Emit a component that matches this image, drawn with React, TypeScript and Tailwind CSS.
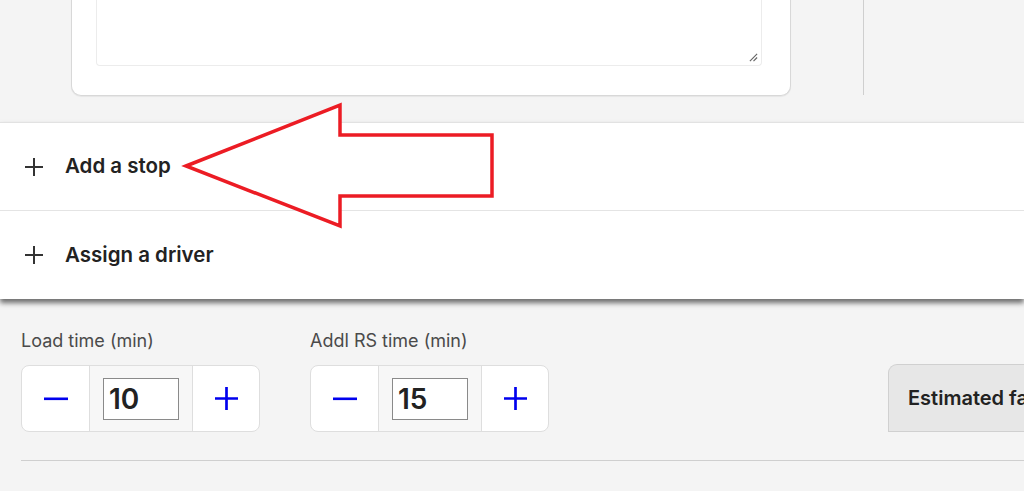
import React from "react";

function Plus({ className }: { className?: string }) {
  return (
    <svg viewBox="0 0 20 20" className={className} fill="none" stroke="currentColor" strokeWidth={2}>
      <path d="M10 1v18M1 10h18" />
    </svg>
  );
}

function Stepper({ value }: { value: string }) {
  return (
    <div className="flex h-[67px] w-[239px] rounded-[8px] border border-[#dedede] bg-white overflow-hidden">
      <div className="flex w-[68px] items-center justify-center border-r border-[#dedede]">
        <svg viewBox="0 0 24 4" className="h-[4px] w-[24px]" fill="#0000ee">
          <rect x="0" y="0.5" width="24" height="2.6" />
        </svg>
      </div>
      <div className="flex flex-1 items-center justify-center bg-[#f7f7f7] border-r border-[#dedede]">
        <div className="flex h-[42px] w-[76px] items-center border border-[#8a8a8a] bg-white pl-[5px] text-[28px] font-semibold leading-none text-[#222] font-['Inter',sans-serif]">
          {value}
        </div>
      </div>
      <div className="flex w-[66px] items-center justify-center">
        <svg viewBox="0 0 24 24" className="h-[23px] w-[23px]" fill="none" stroke="#0000ee" strokeWidth={2.8}>
          <path d="M12 0v24M0 12h24" />
        </svg>
      </div>
    </div>
  );
}

export default function App() {
  return (
    <div className="relative h-[491px] w-[1024px] overflow-hidden bg-[#f4f4f4] font-['Inter',sans-serif]">
      {/* top area */}
      <div className="flex h-[122px]">
        <div className="ml-[71px] mt-[-20px] h-[116px] w-[720px] rounded-b-[10px] border border-t-0 border-[#d8d8d8] bg-white shadow-[0_1px_1px_rgba(0,0,0,0.06)]">
          <div className="relative ml-[24px] h-[86px] w-[666px] rounded-[4px] border border-t-0 border-[#ececec] bg-white">
            <svg viewBox="0 0 10 10" className="absolute bottom-[3px] right-[3px] h-[9px] w-[9px]" stroke="#666" strokeWidth={1.3}>
              <path d="M9 1L1 9M9 5L5 9" />
            </svg>
          </div>
        </div>
        <div className="ml-[72px] h-[95px] w-px bg-[#cfcfcf]" />
      </div>

      {/* white panel */}
      <div className="relative z-10 border-t border-[#e2e2e2] bg-white shadow-[0_4px_5px_rgba(0,0,0,0.55)]">
        <div className="flex h-[88px] items-center border-b border-[#e4e4e4] pl-[24px]">
          <Plus className="h-[20px] w-[20px] text-[#333]" />
          <span className="ml-[21px] text-[20.5px] font-semibold text-[#222]">Add a stop</span>
        </div>
        <div className="flex h-[88px] items-center pl-[24px]">
          <Plus className="h-[20px] w-[20px] text-[#333]" />
          <span className="ml-[21px] text-[20.5px] font-semibold text-[#222]">Assign a driver</span>
        </div>
      </div>

      {/* steppers */}
      <div className="flex items-end pl-[21px] pt-[30px]">
        <div className="flex flex-col">
          <div className="mb-[12px] text-[18px] leading-[24px] text-[#4a4a4a]">Load time (min)</div>
          <Stepper value="10" />
        </div>
        <div className="ml-[50px] flex flex-col">
          <div className="mb-[12px] text-[18px] leading-[24px] text-[#4a4a4a]">Addl RS time (min)</div>
          <Stepper value="15" />
        </div>
        <div className="ml-[339px] flex h-[68px] flex-1 items-center whitespace-nowrap rounded-tl-[9px] border border-r-0 border-[#d0d0d0] bg-[#e7e7e7] pl-[19px] text-[20px] font-semibold text-[#222] overflow-hidden">
          Estimated fare
        </div>
      </div>
      <div className="ml-[21px] mt-[28px] h-px bg-[#cfcfcf]" />

      {/* red arrow overlay */}
      <svg className="pointer-events-none absolute left-0 top-0 z-20" width="1024" height="491">
        <polygon
          points="186,166 340,105 340,135 492,135 492,196 340,196 340,226"
          fill="white"
          stroke="#ec1c24"
          strokeWidth={3.5}
          strokeLinejoin="miter"
        />
      </svg>
    </div>
  );
}
